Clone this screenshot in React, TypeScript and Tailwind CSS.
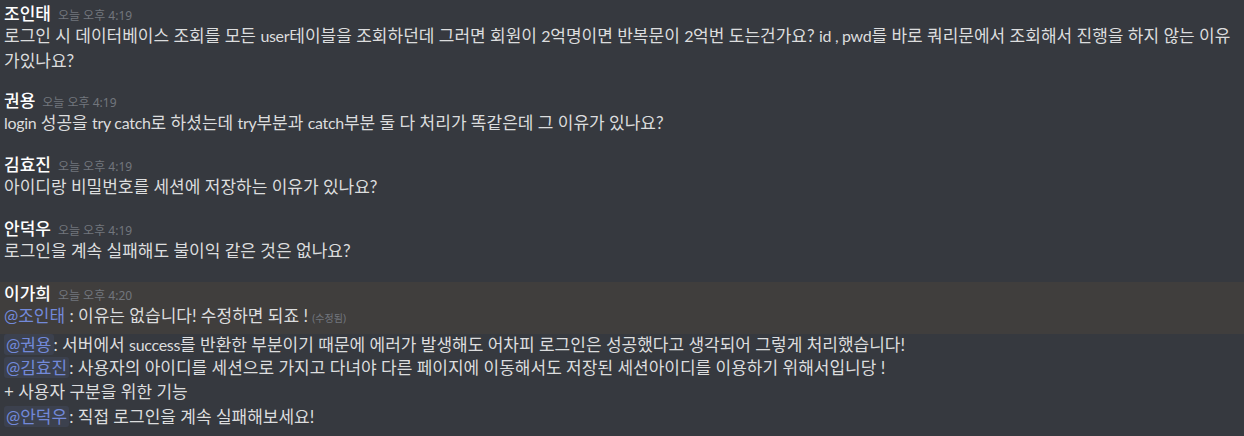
import React from "react";

const nameFont = { fontFamily: '"Noto Sans", "Noto Sans CJK KR", sans-serif' };
const bodyFont = { fontFamily: 'Lato, "Noto Sans CJK KR", sans-serif' };

function Header({ name, time }: { name: string; time: string }) {
  return (
    <div className="flex items-baseline h-[18px] leading-[18px]" style={nameFont}>
      <span className="text-[17px] font-medium text-white">{name}</span>
      <span className="ml-[7px] text-[12px] text-[#72767d]">{time}</span>
    </div>
  );
}

function L({ children }: { children: React.ReactNode }) {
  return <span className="text-[16px] tracking-[-0.3px]">{children}</span>;
}

function Mention({ children, box = true }: { children: React.ReactNode; box?: boolean }) {
  return (
    <span
      className={
        box
          ? "text-[#7289da] bg-[rgba(114,137,218,0.1)] rounded-[3px] px-[2px]"
          : "text-[#7289da]"
      }
    >
      {children}
    </span>
  );
}

export default function App() {
  return (
    <div
      className="w-[1244px] h-[436px] overflow-hidden bg-[#36393f] text-[#dcddde] text-[17px]"
      style={bodyFont}
    >
      <div className="pl-[4px] pt-[5px]">
        <Header name="조인태" time="오늘 오후 4:19" />
        <div className="leading-[25px] whitespace-nowrap">
          로그인 시 데이터베이스 조회를 모든 <L>user</L>테이블을 조회하던데 그러면 회원이 <L>2</L>억명이면 반복문이 <L>2</L>억번 도는건가요? <L>id , pwd</L>를 바로 쿼리문에서 조회해서 진행을 하지 않는 이유
          <br />
          가있나요?
        </div>
      </div>
      <div className="pl-[4px] mt-[19px]">
        <Header name="권용" time="오늘 오후 4:19" />
        <div className="leading-[25px]">
          <L>login</L> 성공을 <L>try catch</L>로 하셨는데 <L>try</L>부분과 <L>catch</L>부분 둘 다 처리가 똑같은데 그 이유가 있나요?
        </div>
      </div>
      <div className="pl-[4px] mt-[21px]">
        <Header name="김효진" time="오늘 오후 4:19" />
        <div className="leading-[25px]">아이디랑 비밀번호를 세션에 저장하는 이유가 있나요?</div>
      </div>
      <div className="pl-[4px] mt-[21px]">
        <Header name="안덕우" time="오늘 오후 4:19" />
        <div className="leading-[25px]">로그인을 계속 실패해도 불이익 같은 것은 없나요?</div>
      </div>
      <div className="mt-[19px] bg-[#403e3d] pl-[4px] py-[3px]">
        <Header name="이가희" time="오늘 오후 4:20" />
        <div className="leading-[25px]">
          <Mention box={false}>@조인태</Mention> : 이유는 없습니다! 수정하면 되죠 !{" "}
          <span className="text-[10px] text-[#72767d]" style={nameFont}>(수정됨)</span>
        </div>
      </div>
      <div className="pl-[4px] -mt-[1px]">
        <div className="leading-[23px]">
          <Mention>@권용</Mention>: 서버에서 <L>success</L>를 반환한 부분이기 때문에 에러가 발생해도 어차피 로그인은 성공했다고 생각되어 그렇게 처리했습니다!
        </div>
        <div className="leading-[24px]">
          <Mention>@김효진</Mention>: 사용자의 아이디를 세션으로 가지고 다녀야 다른 페이지에 이동해서도 저장된 세션아이디를 이용하기 위해서입니당 !
        </div>
        <div className="leading-[24px]">+ 사용자 구분을 위한 기능</div>
        <div className="leading-[26px]">
          <Mention>@안덕우</Mention>: 직접 로그인을 계속 실패해보세요!
        </div>
      </div>
    </div>
  );
}
